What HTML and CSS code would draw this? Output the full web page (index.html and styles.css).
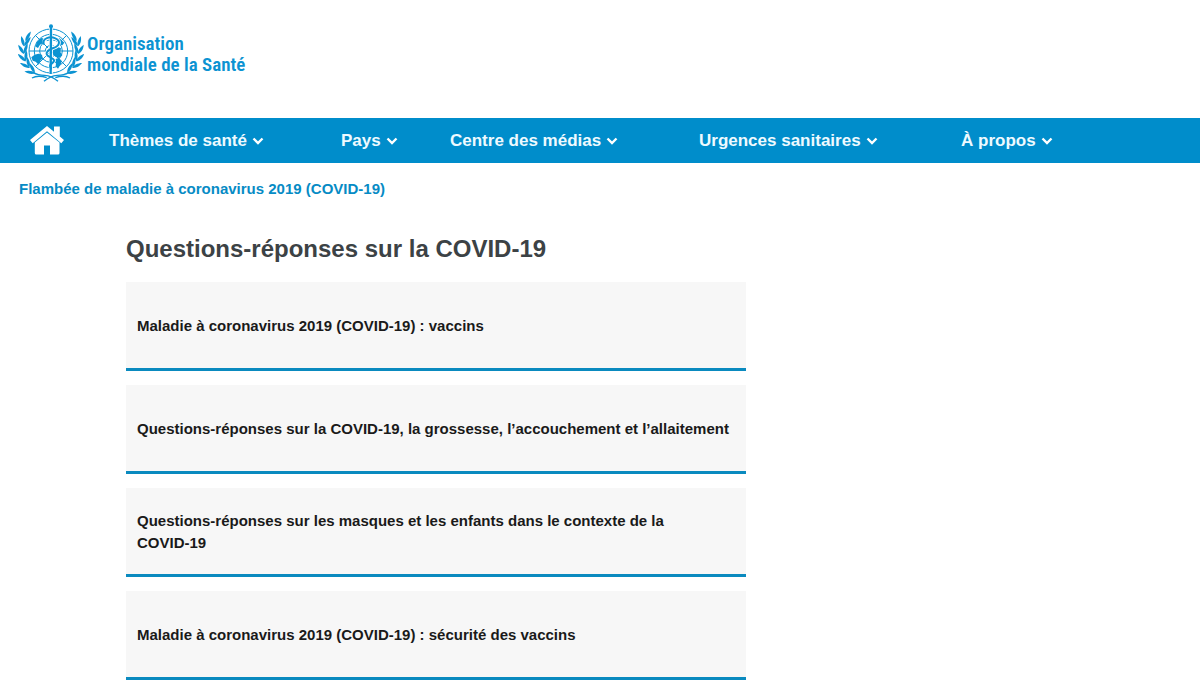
FILE: index.html
```html
<!DOCTYPE html>
<html lang="fr">
<head>
<meta charset="utf-8">
<meta name="viewport" content="width=device-width, initial-scale=1">
<title>Questions-réponses sur la COVID-19</title>
<link rel="stylesheet" href="styles.css">
</head>
<body>
<header class="masthead">
  <a class="brand" href="#">
    <svg class="emblem" viewBox="24 24 198 180" aria-hidden="true">
      <defs>
        <path id="leaf" d="M0 4C-6-4-6-17 1-29C6-17 6-4 0 4Z"/>
        <g id="pair">
          <use href="#leaf" transform="translate(40 108) rotate(-32)"/>
          <use href="#leaf" transform="translate(43 106) rotate(20)"/>
        </g>
        <g id="branch">
          <use href="#leaf" transform="rotate(24 123 105) translate(41 105) rotate(4)"/>
          <use href="#pair" transform="rotate(14 123 105)"/>
          <use href="#pair" transform="rotate(-2 123 105)"/>
          <use href="#pair" transform="rotate(-18 123 105)"/>
          <use href="#pair" transform="rotate(-34 123 105)"/>
          <use href="#pair" transform="rotate(-50 123 105)"/>
          <path class="line thick" d="M70 170C80 176 90 178 104 178C122 179 134 187 144 196"/>
          <path class="line thick" d="M66 186C82 177 98 181 110 185"/>
        </g>
      </defs>
      <g fill="currentColor">
        <use href="#branch"/>
        <use href="#branch" transform="translate(246 0) scale(-1 1)"/>
        <g class="line">
          <circle cx="123" cy="105" r="66"/>
          <circle cx="123" cy="105" r="50"/>
          <circle cx="123" cy="105" r="34"/>
          <circle cx="123" cy="105" r="17"/>
          <path d="M57 105H189M76 58L170 152M170 58L76 152"/>
        </g>
        <path d="M64 124L74 116L85 113L96 116L98 127L91 134L86 146L77 137L68 134Z"/>
        <path d="M80 78L94 66L105 68L101 80L90 86L84 96L77 92Z"/>
        <path d="M129 99L139 91L153 97L151 108L157 118L147 126L137 123L128 115Z"/>
        <path d="M130 131L143 127L154 132L154 142L144 158L137 151L138 142L128 138Z"/>
        <path d="M136 72L149 67L163 80L157 88L145 85Z"/>
      </g>
      <path class="halo" d="M123 33V172"/>
      <path class="halo" d="M104 81C99 65 120 60 136 67C154 75 148 90 130 96C112 102 103 113 116 121C131 129 139 133 125 143C119 147 119 151 123 157"/>
      <path class="staff" d="M123 33L122 174"/>
      <circle cx="123" cy="31" r="6" fill="currentColor"/>
      <path class="snake" d="M101 83C97 67 119 60 136 67C154 75 148 90 130 96C112 102 103 113 116 121C131 129 139 133 125 143C119 147 119 151 123 157"/>
    </svg>
    <span class="brand-name">Organisation<br>mondiale de la Santé</span>
  </a>
</header>

<nav class="main-nav" aria-label="Navigation principale">
  <a class="home" href="#" aria-label="Accueil">
    <svg class="home-icon" viewBox="0 0 34 29" aria-hidden="true">
      <path d="M17 0L0 14L2.7 17.2L17 5.2L31.3 17.2L34 14L29.8 10.5V0.5H24V5.8Z"/>
      <path d="M17 6.4L4.8 16.6V27Q4.8 28.5 6.3 28.5H14V19.5H20V28.5H28Q29.5 28.5 29.5 27V16.6Z"/>
    </svg>
  </a>
  <button class="nav-item" type="button">Thèmes de santé<svg class="chevron" viewBox="0 0 12 8" aria-hidden="true"><path d="M1.5 1.5L6 6L10.5 1.5"/></svg></button>
  <button class="nav-item" type="button">Pays<svg class="chevron" viewBox="0 0 12 8" aria-hidden="true"><path d="M1.5 1.5L6 6L10.5 1.5"/></svg></button>
  <button class="nav-item" type="button">Centre des médias<svg class="chevron" viewBox="0 0 12 8" aria-hidden="true"><path d="M1.5 1.5L6 6L10.5 1.5"/></svg></button>
  <button class="nav-item" type="button">Urgences sanitaires<svg class="chevron" viewBox="0 0 12 8" aria-hidden="true"><path d="M1.5 1.5L6 6L10.5 1.5"/></svg></button>
  <button class="nav-item" type="button">À propos<svg class="chevron" viewBox="0 0 12 8" aria-hidden="true"><path d="M1.5 1.5L6 6L10.5 1.5"/></svg></button>
</nav>

<div class="section-title"><a href="#">Flambée de maladie à coronavirus 2019 (COVID-19)</a></div>

<main class="content">
  <h1>Questions-réponses sur la COVID-19</h1>
  <div class="cards">
    <a class="card" href="#">Maladie à coronavirus 2019 (COVID-19) : vaccins</a>
    <a class="card" href="#">Questions-réponses sur la COVID-19, la grossesse, l’accouchement et l’allaitement</a>
    <a class="card" href="#"><span>Questions-réponses sur les masques et les enfants dans le contexte de la <span class="keep">COVID-19</span></span></a>
    <a class="card" href="#">Maladie à coronavirus 2019 (COVID-19) : sécurité des vaccins</a>
  </div>
</main>
</body>
</html>
```
FILE: styles.css
```css
* {
  box-sizing: border-box;
}

body {
  margin: 0;
  background: #fff;
  color: #1a1a1a;
  font-family: "Liberation Sans", Arial, sans-serif;
  font-weight: 700;
}

a {
  color: inherit;
  text-decoration: none;
}

.masthead {
  display: flex;
  padding: 24px 18px 34px;
}

.brand {
  display: flex;
  align-items: center;
  gap: 3px;
  color: #0c93d2;
}

.emblem {
  display: block;
  width: 66px;
  height: 60px;
}

.line {
  fill: none;
  stroke: currentColor;
  stroke-width: 3;
}

.thick {
  stroke-width: 4;
}

.halo {
  fill: none;
  stroke: #fff;
  stroke-width: 11;
}

.staff {
  stroke: currentColor;
  stroke-width: 7;
}

.snake {
  fill: none;
  stroke: currentColor;
  stroke-width: 6;
  stroke-linecap: round;
}

.brand-name {
  font-family: "Roboto Condensed", Roboto, sans-serif;
  font-size: 19px;
  font-weight: 600;
  line-height: 21px;
}

.main-nav {
  display: grid;
  grid-template-columns: 109fr 232fr 109fr 249fr 262fr 239fr;
  align-items: center;
  min-height: 45px;
  background: #008dcb;
  color: #fff;
}

.home {
  padding-left: 30px;
}

.home-icon {
  display: block;
  width: 34px;
  height: 29px;
  fill: #fff;
}

.nav-item {
  display: flex;
  align-items: center;
  gap: 5px;
  padding: 0;
  border: 0;
  background: none;
  color: #eefaff;
  font: inherit;
  font-size: 17px;
  line-height: 24px;
  white-space: nowrap;
  cursor: pointer;
}

.chevron {
  width: 12px;
  height: 8px;
  fill: none;
  stroke: #fff;
  stroke-width: 2.4;
}

.section-title {
  padding: 15px 19px;
  color: #068bc5;
  font-size: 15px;
  line-height: 22px;
}

.content {
  max-width: 746px;
  padding: 18px 0 10px 126px;
}

h1 {
  margin: 0 0 18px;
  color: #3c4245;
  font-size: 24px;
  line-height: 31px;
}

.cards {
  display: grid;
  gap: 14px;
}

.card {
  display: flex;
  align-items: center;
  min-height: 89px;
  padding: 11px 11px 9px;
  border-bottom: 3px solid #0a8abf;
  background: #f7f7f7;
  font-size: 15px;
  line-height: 22px;
}

.keep {
  white-space: nowrap;
}
```
